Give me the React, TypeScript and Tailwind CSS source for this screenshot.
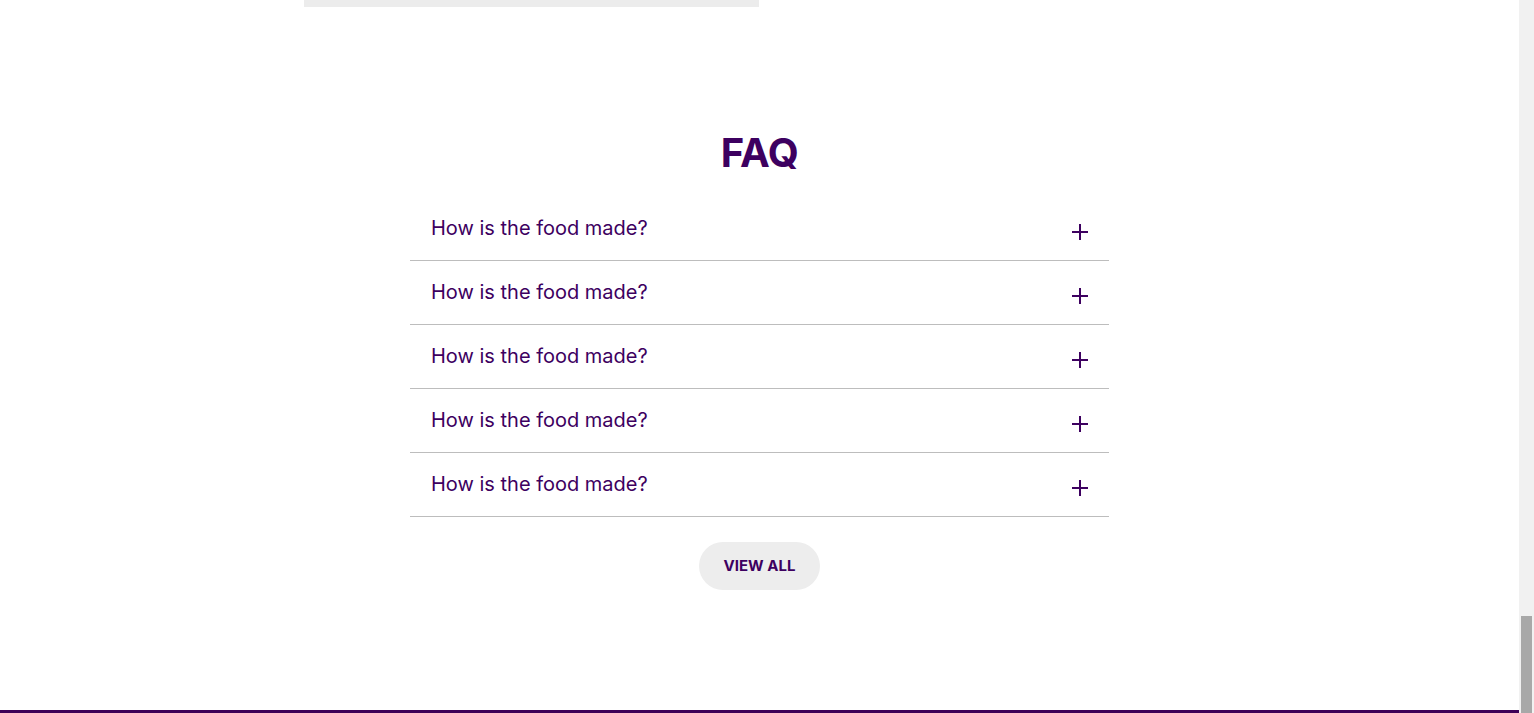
import React from "react";

const Q = "How is the food made?";

function Plus() {
  return (
    <svg width="18" height="18" viewBox="0 0 18 18" className="mt-[6px] mr-[20px]">
      <path d="M9 1v16M1 9h16" stroke="#3d0060" strokeWidth="2" fill="none" />
    </svg>
  );
}

export default function App() {
  return (
    <div className="flex h-[713px] w-full overflow-hidden bg-white" style={{ fontFamily: "Inter, 'Noto Sans', sans-serif" }}>
      <div className="flex flex-1 flex-col">
        <div className="flex h-[7px]">
          <div className="ml-[304px] h-[7px] w-[455px] bg-[#ececec]" />
        </div>
        <div className="flex flex-1 flex-col items-center pt-[122px]">
          <h2 className="text-[40px] font-bold leading-[48px] tracking-[-0.5px] text-[#3d0060]">FAQ</h2>
          <div className="mt-[20px] flex w-[699px] flex-col">
            {[0, 1, 2, 3, 4].map((i) => (
              <div key={i} className="flex h-[64px] items-center justify-between border-b border-[#bdbdbd] pl-[21px]">
                <span className="-mt-[1px] text-[20px] font-normal text-[#3d0060]">{Q}</span>
                <Plus />
              </div>
            ))}
          </div>
          <button className="mt-[25px] flex h-[48px] w-[121px] items-center justify-center rounded-full bg-[#ededed] text-[15px] font-bold text-[#3d0060]">
            VIEW ALL
          </button>
        </div>
        <div className="h-[3px] w-full bg-[#3d0057]" />
      </div>
      <div className="flex w-[15px] flex-col bg-[#f1f1f1]">
        <div className="flex-1" />
        <div className="mx-[2px] h-[97px] bg-[#a8a8a8]" />
      </div>
    </div>
  );
}
